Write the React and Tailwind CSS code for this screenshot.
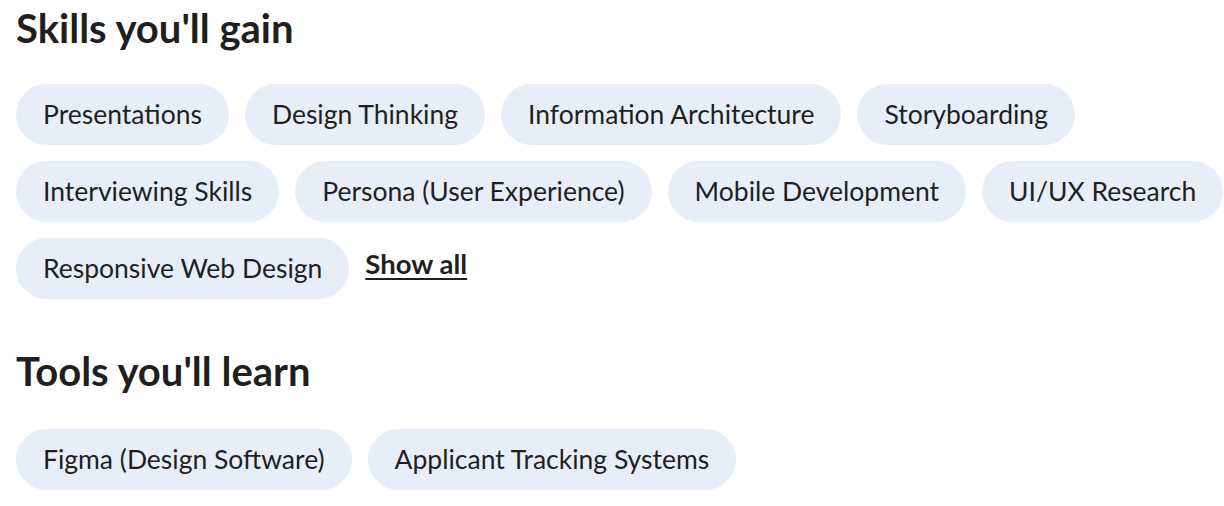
import React from 'react';

const skills = [
    'Presentations',
    'Design Thinking',
    'Information Architecture',
    'Storyboarding',
    'Interviewing Skills',
    'Persona (User Experience)',
    'Mobile Development',
    'UI/UX Research',
    'Responsive Web Design',
];

const tools = ['Figma (Design Software)', 'Applicant Tracking Systems'];

function Chip({ label }) {
    return (
        <span className="inline-flex h-[61px] items-center whitespace-nowrap rounded-full bg-[#e8eef8] px-[27px] text-[26.5px] text-[#1f1f1f]">
            {label}
        </span>
    );
}

export default function App() {
    return (
        <div className="bg-white pl-4 pt-[5px] text-[#1f1f1f]" style={{ fontFamily: '"Lato", "Noto Sans", sans-serif' }}>
            {/* --- SKILLS --- */}
            <h2 className="text-[40px] font-bold leading-[46px]">Skills you'll gain</h2>
            <div className="mt-[33px] flex flex-wrap items-center gap-4">
                {skills.map((s) => (
                    <Chip key={s} label={s} />
                ))}
                <a href="#" className="-mt-[10px] text-[27.5px] font-bold underline decoration-2 underline-offset-4">
                    Show all
                </a>
            </div>

            {/* --- TOOLS --- */}
            <h2 className="mt-[49px] text-[40px] font-bold leading-[46px]">Tools you'll learn</h2>
            <div className="mt-[35px] flex flex-wrap gap-4">
                {tools.map((t) => (
                    <Chip key={t} label={t} />
                ))}
            </div>
        </div>
    );
}
